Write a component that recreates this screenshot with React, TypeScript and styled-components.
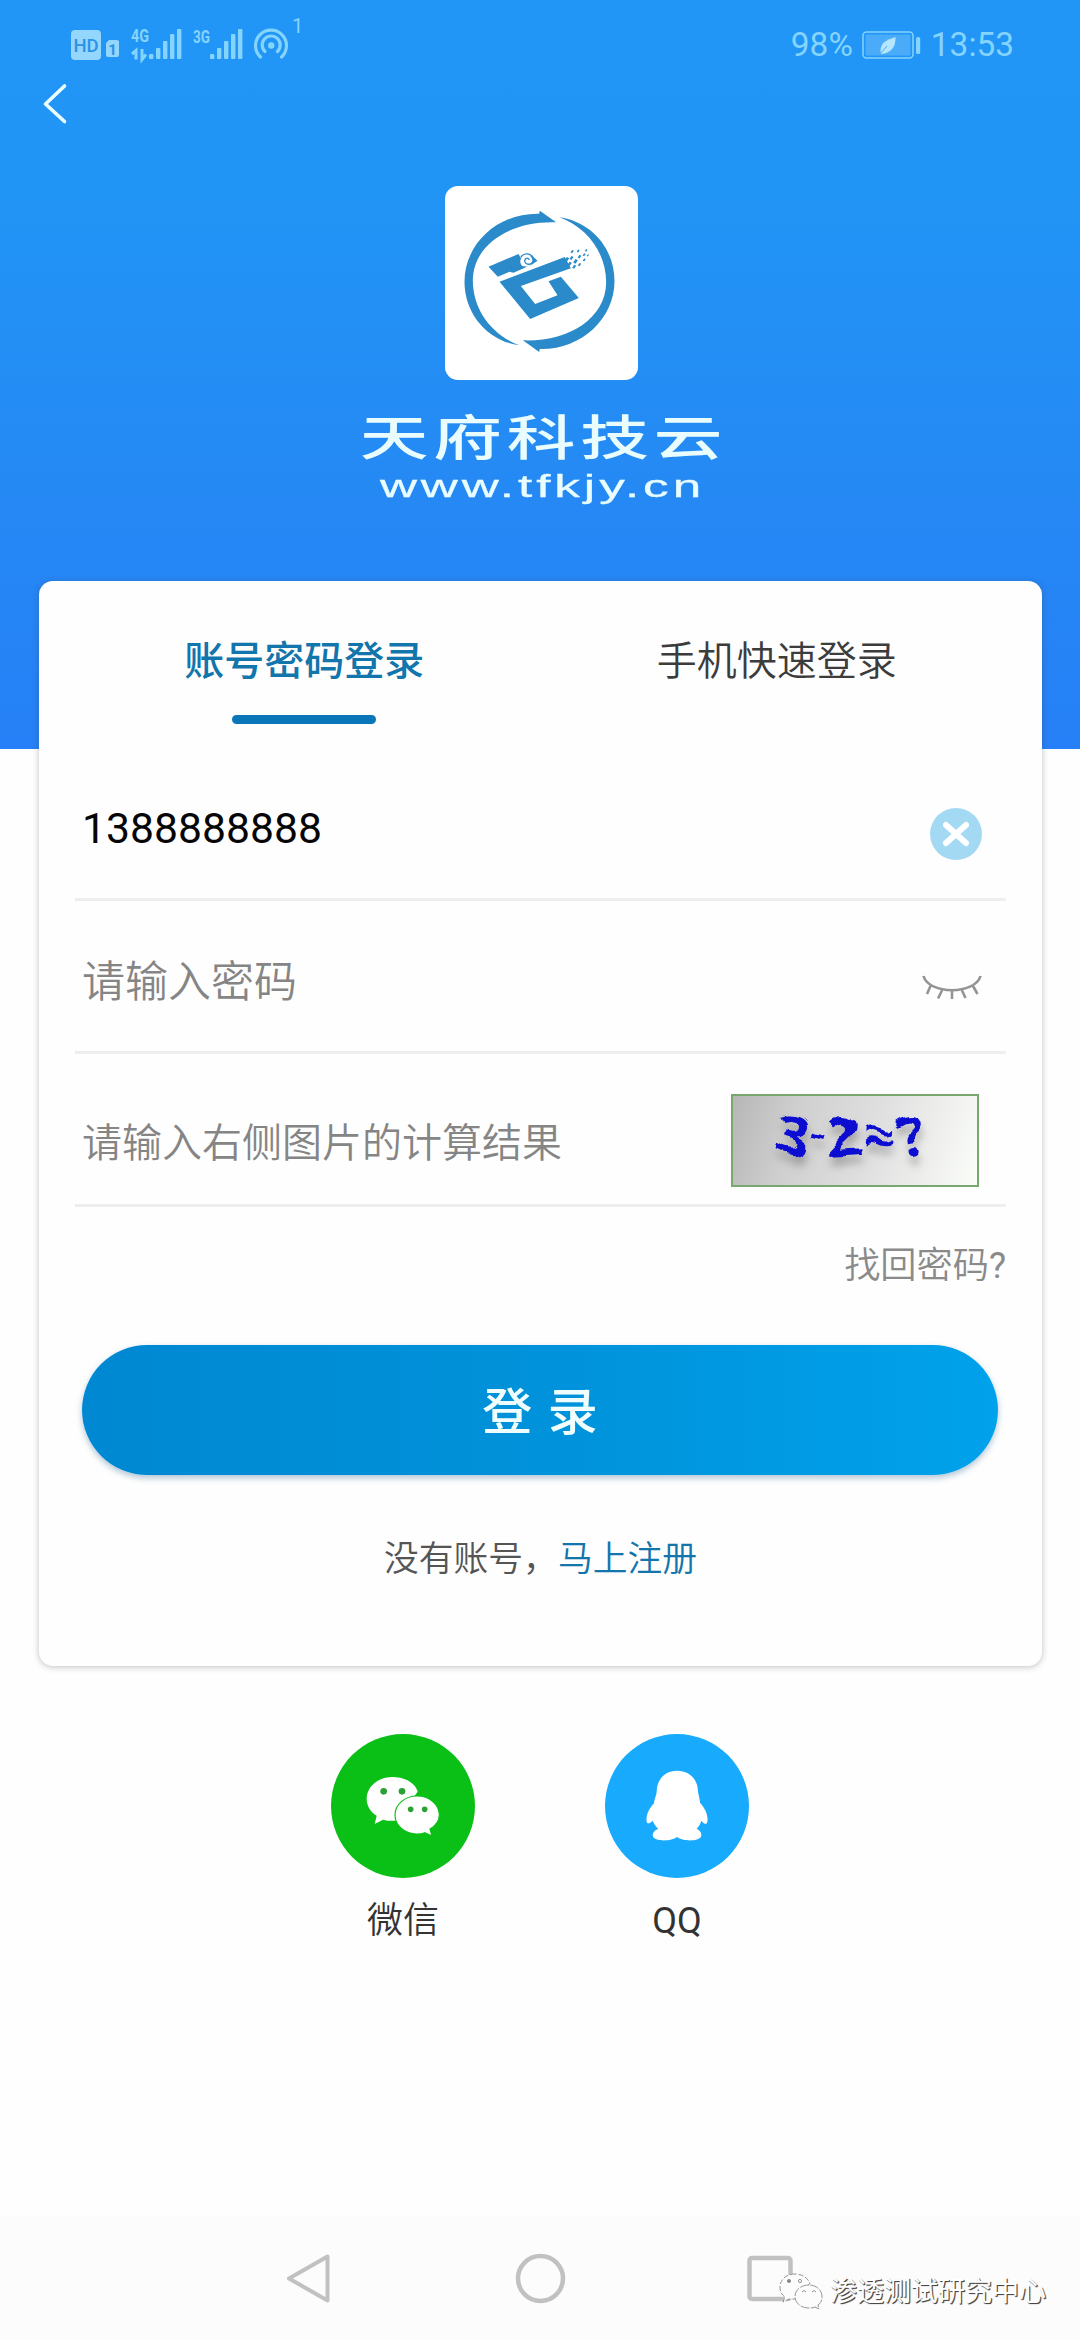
import React from "react";
import styled, { createGlobalStyle } from "styled-components";

const GlobalStyle = createGlobalStyle`
  * { box-sizing: border-box; }
  body { margin: 0; background: #fff; }
  svg { display: block; flex: none; }
`;

const ICE = "#84d4fd";
const LINK = "#1275ab";

const Page = styled.div`
  position: relative;
  display: flex;
  flex-direction: column;
  width: 1080px;
  height: 2340px;
  overflow: hidden;
  background: #fefefe;
  font-family: Roboto, "Noto Sans CJK SC", sans-serif;
`;

const Hero = styled.header`
  display: flex;
  flex-direction: column;
  flex: none;
  height: 749px;
  background: linear-gradient(180deg, #2196f6 0%, #2195f6 25%, #2589f4 65%, #2680f7 100%);
`;

const StatusBar = styled.div`
  display: flex;
  justify-content: space-between;
  height: 76px;
  padding: 0 66px 0 71px;
`;

const StatusRight = styled.div`
  display: flex;
  align-items: center;
  height: 90px;
  color: ${ICE};
  font-size: 33.4px;
  line-height: 40px;
`;

const BatterySlot = styled.span`
  margin: 0 10px 0 9px;
`;

const BackButton = styled.button`
  align-self: flex-start;
  margin: 7px 0 0 42px;
  padding: 0;
  border: 0;
  background: none;
`;

const Brand = styled.div`
  display: flex;
  flex-direction: column;
  align-items: center;
  margin-top: 61px;
  color: #e9fdff;
`;

const LogoTile = styled.div`
  width: 193px;
  height: 194px;
  margin-left: 2px;
  overflow: hidden;
  border-radius: 13px;
  background: #fefffe;
`;

const BrandName = styled.h1`
  margin: 22px 0 0;
  padding-left: 5px;
  font-family: "Noto Sans CJK SC", sans-serif;
  font-size: 48px;
  font-weight: 500;
  line-height: 64px;
  letter-spacing: 3.4px;
  transform: scaleX(1.43);
`;

const BrandUrl = styled.p`
  margin: 3px 0 0;
  padding-left: 3px;
  font-family: "Liberation Sans", sans-serif;
  font-size: 31px;
  line-height: 36px;
  letter-spacing: 2.4px;
  -webkit-text-stroke: 0.3px #e9fdff;
  transform: scaleX(1.65);
`;

const Card = styled.main`
  flex: none;
  height: 1085px;
  margin: -168px 38px 0 39px;
  padding: 51px 36px 0;
  border-radius: 14px;
  background: #fefefe;
  box-shadow: 0 1px 6px rgba(60, 60, 60, 0.32);
`;

const Tabs = styled.nav`
  display: grid;
  grid-template-columns: 1fr 1fr;
  margin: 0 -7px;
`;

const Tab = styled.div<{ $active?: boolean }>`
  display: flex;
  flex-direction: column;
  align-items: center;
  gap: 23px;
  color: ${(p) => (p.$active ? LINK : "#3c3c3c")};
  font-size: 40px;
  font-weight: ${(p) => (p.$active ? 500 : 350)};
  line-height: 60px;
`;

const TabMarker = styled.span`
  width: 144px;
  height: 9px;
  border-radius: 5px;
  background: #0a76b8;
`;

const Field = styled.div<{ $size: number; $filled?: boolean; $drop: number }>`
  display: flex;
  align-items: center;
  justify-content: space-between;
  height: 153px;
  padding: ${(p) => p.$drop}px 0 0 7px;
  border-bottom: 3px solid #eeeeee;
  color: ${(p) => (p.$filled ? "#060606" : "#858585")};
  font-size: ${(p) => p.$size}px;
  font-weight: ${(p) => (p.$filled ? 400 : 350)};
  line-height: 60px;
`;

const Fields = styled.div`
  margin-top: 24px;
`;

const FieldIcon = styled.span<{ $drop: number }>`
  margin: ${(p) => p.$drop}px 24px 0 0;
`;

const Captcha = styled.div`
  display: flex;
  align-items: center;
  width: 248px;
  height: 93px;
  margin: -6px 27px 0 0;
  padding-left: 42px;
  border: 2px solid #78a86f;
  background: linear-gradient(105deg, #b6b6b6 0%, #cfcfcf 25%, #e0e0e0 58%, #fbfdf9 100%);
`;

const CaptchaText = styled.div`
  display: flex;
  align-items: center;
  margin-top: -14px;
  color: #0c0cd2;
  font-family: "Open Sans", sans-serif;
  filter: url(#ripple) drop-shadow(1px 8px 4px rgba(50, 50, 50, 0.6));
`;

const Glyph = styled.span<{ $w: number; $size: number; $turn: number; $weight?: number }>`
  display: flex;
  justify-content: center;
  width: ${(p) => p.$w}px;
  font-size: ${(p) => p.$size}px;
  font-weight: ${(p) => p.$weight ?? 700};
  transform: rotate(${(p) => p.$turn}deg) scaleX(1.1);
`;

const Forgot = styled.div`
  margin-top: 34px;
  color: #8a8a8a;
  font-size: 36.2px;
  font-weight: 350;
  line-height: 50px;
  text-align: right;
`;

const Latin = styled.span`
  font-weight: 400;
`;

const LoginButton = styled.button`
  display: block;
  width: 916px;
  height: 130px;
  margin: 54px 0 0 7px;
  padding: 5px 0 0;
  border: 0;
  border-radius: 65px;
  background: linear-gradient(90deg, #0088d2 0%, #0092da 50%, #00a2eb 100%);
  box-shadow: 0 3px 6px rgba(60, 110, 150, 0.4);
  color: #f0feff;
  font-family: inherit;
  font-size: 50px;
  font-weight: 500;
  line-height: 70px;
  word-spacing: 3px;
`;

const SignUp = styled.p`
  margin: 59px 0 0;
  color: #555;
  font-size: 34.8px;
  font-weight: 350;
  line-height: 50px;
  text-align: center;
`;

const SignUpLink = styled.a`
  color: ${LINK};
`;

const Socials = styled.section`
  display: flex;
  justify-content: center;
  gap: 130px;
  margin-top: 68px;
`;

const Social = styled.div`
  display: flex;
  flex-direction: column;
  align-items: center;
  gap: 21px;
  color: #333;
  font-size: 36px;
  font-weight: 350;
  line-height: 44px;
`;

const SystemNav = styled.footer`
  display: grid;
  grid-template-columns: 51px 51px 51px;
  justify-content: center;
  align-items: center;
  column-gap: 180px;
  height: 124px;
  margin-top: auto;
  background: #fcfcfc;
`;

const Watermark = styled.div`
  position: absolute;
  right: 34px;
  bottom: 28px;
  display: flex;
  align-items: center;
  gap: 7px;
  color: #fff;
  font-size: 27px;
  line-height: 40px;
  text-shadow: 1px 1px 1px #444, 1px 1px 0 #777;
`;

const Bars = ({ x }: { x: number }) => (
  <g fill={ICE}>
    {[5, 11, 18, 25, 30].map((h, i) => (
      <rect key={h} x={x + i * 7} y={59 - h} width="4.4" height={h} rx="1" />
    ))}
  </g>
);

const StatusIcons = () => (
  <svg width="240" height="70" viewBox="71 0 240 70" fontFamily="Roboto, sans-serif">
    <rect x="71" y="30" width="30" height="30" rx="4" fill="#94d6fc" />
    <text x="86" y="52" fontSize="18.500" fontWeight="500" fill="#2a93e6" textAnchor="middle">HD</text>
    <path d="M106 43l3-3h8q2 0 2 2v13q0 2-2 2h-9q-2 0-2-2z" fill="#94d6fc" />
    <text x="112.500" y="54.500" fontSize="15" fontWeight="700" fill="#2a93e6" textAnchor="middle">1</text>
    <g fill={ICE} fontWeight="700" fontSize="18">
      <text x="131" y="42" textLength="18" lengthAdjust="spacingAndGlyphs">4G</text>
      <text x="193" y="42.500" textLength="17" lengthAdjust="spacingAndGlyphs">3G</text>
    </g>
    <path d="M132 54l4-3.500V59.500M142 49v10.500l4-5" fill="none" stroke={ICE} strokeWidth="3" />
    <Bars x={149} />
    <Bars x={210} />
    <g fill="none" stroke={ICE} strokeWidth="3.200" strokeLinecap="round">
      <path d="M260.500 57a15.500 15.500 0 1 1 21 0" />
      <path d="M265 51.500a9 9 0 1 1 12.400 0" />
    </g>
    <circle cx="271.200" cy="45.500" r="3.200" fill={ICE} />
    <text x="292" y="33" fontSize="20" fill={ICE}>1</text>
  </svg>
);

const Battery = () => (
  <svg width="59" height="28" viewBox="0 0 59 28">
    <rect x="1" y="1" width="50" height="26" rx="3.500" fill="none" stroke={ICE} strokeWidth="1.500" />
    <rect x="3.500" y="3.500" width="45" height="21" rx="1" fill="#4aabf8" />
    <rect x="54" y="6" width="4.200" height="17" rx="1.500" fill={ICE} />
    <path d="M33.500 6C24 9 18 12 18.500 21l1 2C28 22 34 17 33.500 6z" fill="#b6e6fd" />
    <path d="M19 22l6-7" stroke="#50b0f9" strokeWidth="1" />
  </svg>
);

const swoosh =
  "M329 122 L378 157 C245 152 130 220 128 330 C128 420 185 495 268 526 C170 512 103 430 103 335 C103 220 205 128 327 131 Z";

const scales = [
  [410, 268, 7], [424, 264, 6], [418, 282, 7], [432, 290, 6], [436, 274, 7], [426, 245, 5],
  [448, 260, 5.5], [448, 284, 5], [444, 243, 4.5], [462, 254, 4.5], [462, 270, 4.5], [468, 241, 4], [473, 256, 3.5],
];

const Logo = () => (
  <svg width="193" height="194" viewBox="45 48 578 582" fill="#2a8aca">
    <path d={swoosh} />
    <path d={swoosh} transform="rotate(180 328 334)" />
    <path d="M175 290 L265 252 L273 266 Q266 276 276 288 L292 290 L322 270 L304 284 L250 308 L238 305 L203 320 Z" />
    <path d="M305 256 L322 272 L304 284 Q314 272 300 258 Z" />
    <path d="M272 262 C280 247 304 248 309 266 C312 283 288 289 284 275 C282 264 296 261 297 270" fill="none" stroke="#2a8aca" strokeWidth="4" />
    <path d="M208 335 L404 261 L414 280 L422 295 L272 348 L315 402 L382 376 L355 334 L392 320 L446 384 L300 447 Z" />
    {scales.map(([x, y, r]) => (
      <path key={`${x}-${y}`} d={`M${x - r} ${y + r / 2} L${x} ${y - r} L${x + r} ${y - r / 2} L${x} ${y + r} Z`} />
    ))}
  </svg>
);

const ClearIcon = () => (
  <svg width="52" height="52" viewBox="0 0 52 52">
    <circle cx="26" cy="26" r="26" fill="#a3d9f3" />
    <path d="M16 17l20 18M36 17l-20 18" stroke="#fff" strokeWidth="6" strokeLinecap="round" />
  </svg>
);

const ClosedEye = () => (
  <svg width="60" height="25" viewBox="0 0 60 25" fill="none" stroke="#949494" strokeWidth="2.600">
    <path d="M1.500 1C7 20 53 20 58.500 1M8.500 11L5 19M20 15.500L16 23.500M30 16v8M40 15.500l3.500 7.500M51 11l4.500 8" />
  </svg>
);

const RippleFilter = () => (
  <svg width="0" height="0">
    <filter id="ripple" x="-10%" y="-10%" width="120%" height="120%">
      <feTurbulence type="fractalNoise" baseFrequency="0.05" numOctaves="1" seed="4" result="noise" />
      <feDisplacementMap in="SourceGraphic" in2="noise" scale="14" xChannelSelector="R" yChannelSelector="G" />
    </filter>
  </svg>
);

const WeChatIcon = () => (
  <svg width="144" height="144" viewBox="93 72 432 432">
    <circle cx="309" cy="288" r="216" fill="#0abf16" />
    <path d="M277 201c-43 0-77 29-77 65 0 21 11 39 30 51l-6 25 25-13c12 4 26 4 40 3l64-87c-7-26-38-44-76-44z" fill="#fff" />
    <circle cx="251" cy="244" r="10" fill="#2aa035" />
    <circle cx="306" cy="244" r="10" fill="#2aa035" />
    <path d="M351 258c-37 0-66 26-66 57 0 32 29 57 66 57 8 0 16-1 23-4l22 10-6-21c17-10 28-25 28-42 0-31-30-57-67-57z" fill="#fff" stroke="#0abf16" strokeWidth="3.500" />
    <circle cx="332" cy="298" r="8.500" fill="#2aa035" />
    <circle cx="374" cy="298" r="8.500" fill="#2aa035" />
  </svg>
);

const QQIcon = () => (
  <svg width="144" height="144" viewBox="915 72 432 432">
    <circle cx="1131" cy="288" r="216" fill="#18abfd" />
    <path
      d="M1131 182C1092 182 1070 212 1070 245C1070 255 1062 268 1062 280C1048 295 1037 315 1040 335C1043 345 1052 338 1058 332C1062 342 1068 350 1075 356C1060 362 1055 372 1060 382C1070 395 1115 394 1131 381C1147 394 1192 395 1202 382C1207 372 1202 362 1190 356C1196 350 1201 342 1204 332C1212 343 1220 345 1222 335C1226 315 1212 290 1200 278C1200 268 1196 258 1194 245C1194 212 1172 182 1131 182Z"
      fill="#fff"
    />
  </svg>
);

const WatermarkIcon = () => (
  <svg width="44" height="38" viewBox="0 0 44 38" fill="#fcfcfc" stroke="#888" strokeWidth="0.900">
    <path d="M16 1C7 1 1 7 1 14c0 5 2 8 5 10l-2 5 6-3h8L31 10C28 4 22 1 16 1z" strokeDasharray="5 2" />
    <circle cx="10" cy="8" r="1.600" fill="#888" />
    <circle cx="21" cy="8" r="1.600" fill="none" />
    <path d="M30 12c-8 0-14 5-14 11.500S22 35 30 35c2 0 4 0 6-1l4 2-1-4c3-2 4-5 4-8.500C43 17 37 12 30 12z" strokeDasharray="9 1.500" />
    <path d="M23 19q2-3 4 0M33 19q2-3 4 0" fill="none" />
  </svg>
);

export default function App() {
  return (
    <Page>
      <GlobalStyle />
      <Hero>
        <StatusBar>
          <StatusIcons />
          <StatusRight>
            98%
            <BatterySlot><Battery /></BatterySlot>
            13:53
          </StatusRight>
        </StatusBar>
        <BackButton aria-label="返回">
          <svg width="26" height="42" viewBox="0 0 26 42" fill="none" stroke="#ecffff" strokeWidth="3.600" strokeLinecap="round" strokeLinejoin="round">
            <path d="M22.500 3L3.500 21L22.500 38.500" />
          </svg>
        </BackButton>
        <Brand>
          <LogoTile><Logo /></LogoTile>
          <BrandName>天府科技云</BrandName>
          <BrandUrl>www.tfkjy.cn</BrandUrl>
        </Brand>
      </Hero>

      <Card>
        <Tabs>
          <Tab $active>账号密码登录<TabMarker /></Tab>
          <Tab>手机快速登录</Tab>
        </Tabs>
        <Fields>
          <Field $size={42.7} $filled $drop={10}>
            1388888888
            <FieldIcon $drop={12}><ClearIcon /></FieldIcon>
          </Field>
          <Field $size={43} $drop={12}>
            请输入密码
            <FieldIcon $drop={10}><ClosedEye /></FieldIcon>
          </Field>
          <Field $size={40} $drop={29}>
            请输入右侧图片的计算结果
            <Captcha>
              <RippleFilter />
              <CaptchaText>
                <Glyph $w={36} $size={54} $turn={12}>3</Glyph>
                <Glyph $w={14} $size={36} $turn={18}>-</Glyph>
                <Glyph $w={37} $size={54} $turn={-4}>2</Glyph>
                <Glyph $w={34} $size={56} $turn={4} $weight={600}>≈</Glyph>
                <Glyph $w={31} $size={54} $turn={-10}>?</Glyph>
              </CaptchaText>
            </Captcha>
          </Field>
        </Fields>
        <Forgot>找回密码<Latin>?</Latin></Forgot>
        <LoginButton>登 录</LoginButton>
        <SignUp>没有账号，<SignUpLink>马上注册</SignUpLink></SignUp>
      </Card>

      <Socials>
        <Social><WeChatIcon />微信</Social>
        <Social><QQIcon /><Latin>QQ</Latin></Social>
      </Socials>

      <SystemNav>
        <svg width="51" height="51" viewBox="0 0 51 51" fill="none" stroke="#c1c1c1" strokeWidth="4" strokeLinejoin="round">
          <path d="M5 25.500L43.500 3.500V47.500Z" />
        </svg>
        <svg width="51" height="51" viewBox="0 0 51 51" fill="none" stroke="#c1c1c1" strokeWidth="4.500">
          <circle cx="25.500" cy="25.500" r="22.500" />
        </svg>
        <svg width="51" height="51" viewBox="0 0 51 51" fill="none" stroke="#c1c1c1" strokeWidth="4.500">
          <rect x="3.500" y="5" width="41" height="41" rx="2.500" />
        </svg>
      </SystemNav>
      <Watermark><WatermarkIcon />渗透测试研究中心</Watermark>
    </Page>
  );
}
